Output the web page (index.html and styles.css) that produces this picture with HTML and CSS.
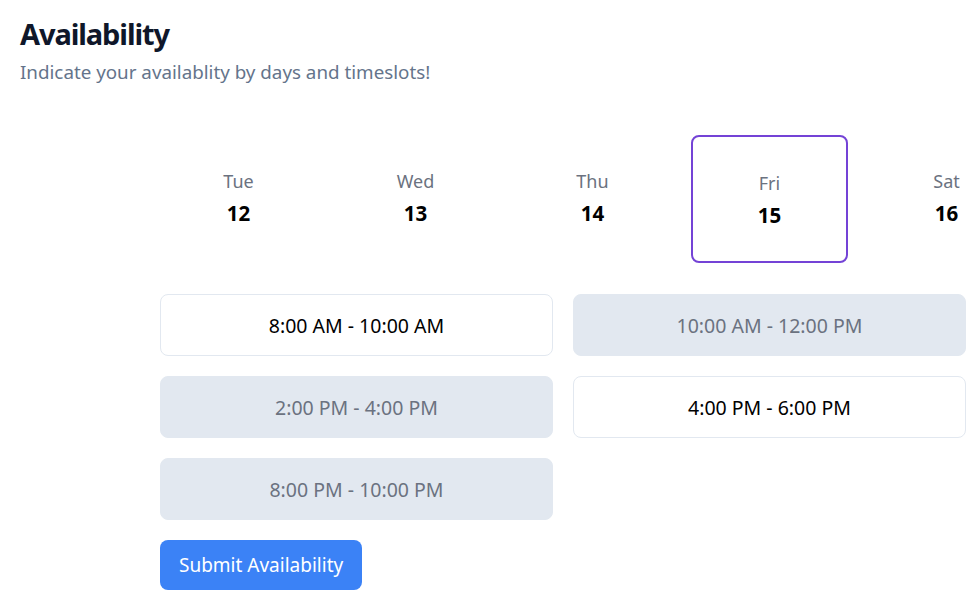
FILE: index.html
```html
<!DOCTYPE html>
<html lang="en">
<head>
<meta charset="utf-8">
<title>Availability</title>
<link rel="stylesheet" href="styles.css">
</head>
<body>
<main class="page">
  <h1 class="title">Availability</h1>
  <p class="subtitle">Indicate your availablity by days and timeslots!</p>

  <section class="scheduler">
    <div class="days">
      <div class="day"><span class="day-name">Tue</span><span class="day-num">12</span></div>
      <div class="day"><span class="day-name">Wed</span><span class="day-num">13</span></div>
      <div class="day"><span class="day-name">Thu</span><span class="day-num">14</span></div>
      <div class="day day-selected"><span class="day-name">Fri</span><span class="day-num">15</span></div>
      <div class="day"><span class="day-name">Sat</span><span class="day-num">16</span></div>
    </div>

    <div class="slots">
      <button class="slot">8:00 AM - 10:00 AM</button>
      <button class="slot slot-off">10:00 AM - 12:00 PM</button>
      <button class="slot slot-off">2:00 PM - 4:00 PM</button>
      <button class="slot">4:00 PM - 6:00 PM</button>
      <button class="slot slot-off">8:00 PM - 10:00 PM</button>
    </div>

    <button class="submit">Submit Availability</button>
  </section>
</main>
</body>
</html>
```

FILE: styles.css
```css
* {
  box-sizing: border-box;
}

html, body {
  margin: 0;
  padding: 0;
  background: #ffffff;
  overflow: hidden;
}

body {
  font-family: "Segoe UI", "Noto Sans", "Open Sans", sans-serif;
  color: #000000;
}

.page {
  padding: 16px 20px;
  width: 979px;
}

.title {
  margin: 0 0 6px;
  font-size: 29px;
  line-height: 36px;
  font-weight: 700;
  color: #0f172a;
  letter-spacing: -1.1px;
}

.subtitle {
  margin: 0;
  font-size: 18.8px;
  line-height: 28px;
  color: #64748b;
}

.scheduler {
  margin-top: 49px;
  margin-left: 140px;
  width: 806px;
}

.days {
  display: flex;
  gap: 20px;
  align-items: flex-start;
  margin-right: -13px;
  overflow: hidden;
}

.day {
  flex: 0 0 157px;
  display: flex;
  flex-direction: column;
  align-items: center;
  padding: 32px 0;
  border-radius: 8px;
}

.day-selected {
  border: 2px solid #7443d6;
}

.day-name {
  font-size: 18px;
  line-height: 28px;
  color: #6b7280;
}

.day-num {
  margin-top: 4px;
  font-size: 20.5px;
  line-height: 28px;
  font-weight: 700;
  color: #000000;
}

.slots {
  margin-top: 31px;
  display: grid;
  grid-template-columns: 1fr 1fr;
  gap: 20px;
}

.slot {
  height: 62px;
  border: 1px solid #e2e8f0;
  border-radius: 8px;
  background: #ffffff;
  font-family: inherit;
  font-size: 19.5px;
  color: #000000;
  padding: 0;
}

.slot-off {
  background: #e2e8f0;
  border-color: #e2e8f0;
  color: #6b7280;
}

.submit {
  margin-top: 20px;
  height: 50px;
  padding: 0 19px;
  border: none;
  border-radius: 8px;
  background: #3b82f6;
  color: #ffffff;
  font-family: inherit;
  font-size: 19px;
}
```
